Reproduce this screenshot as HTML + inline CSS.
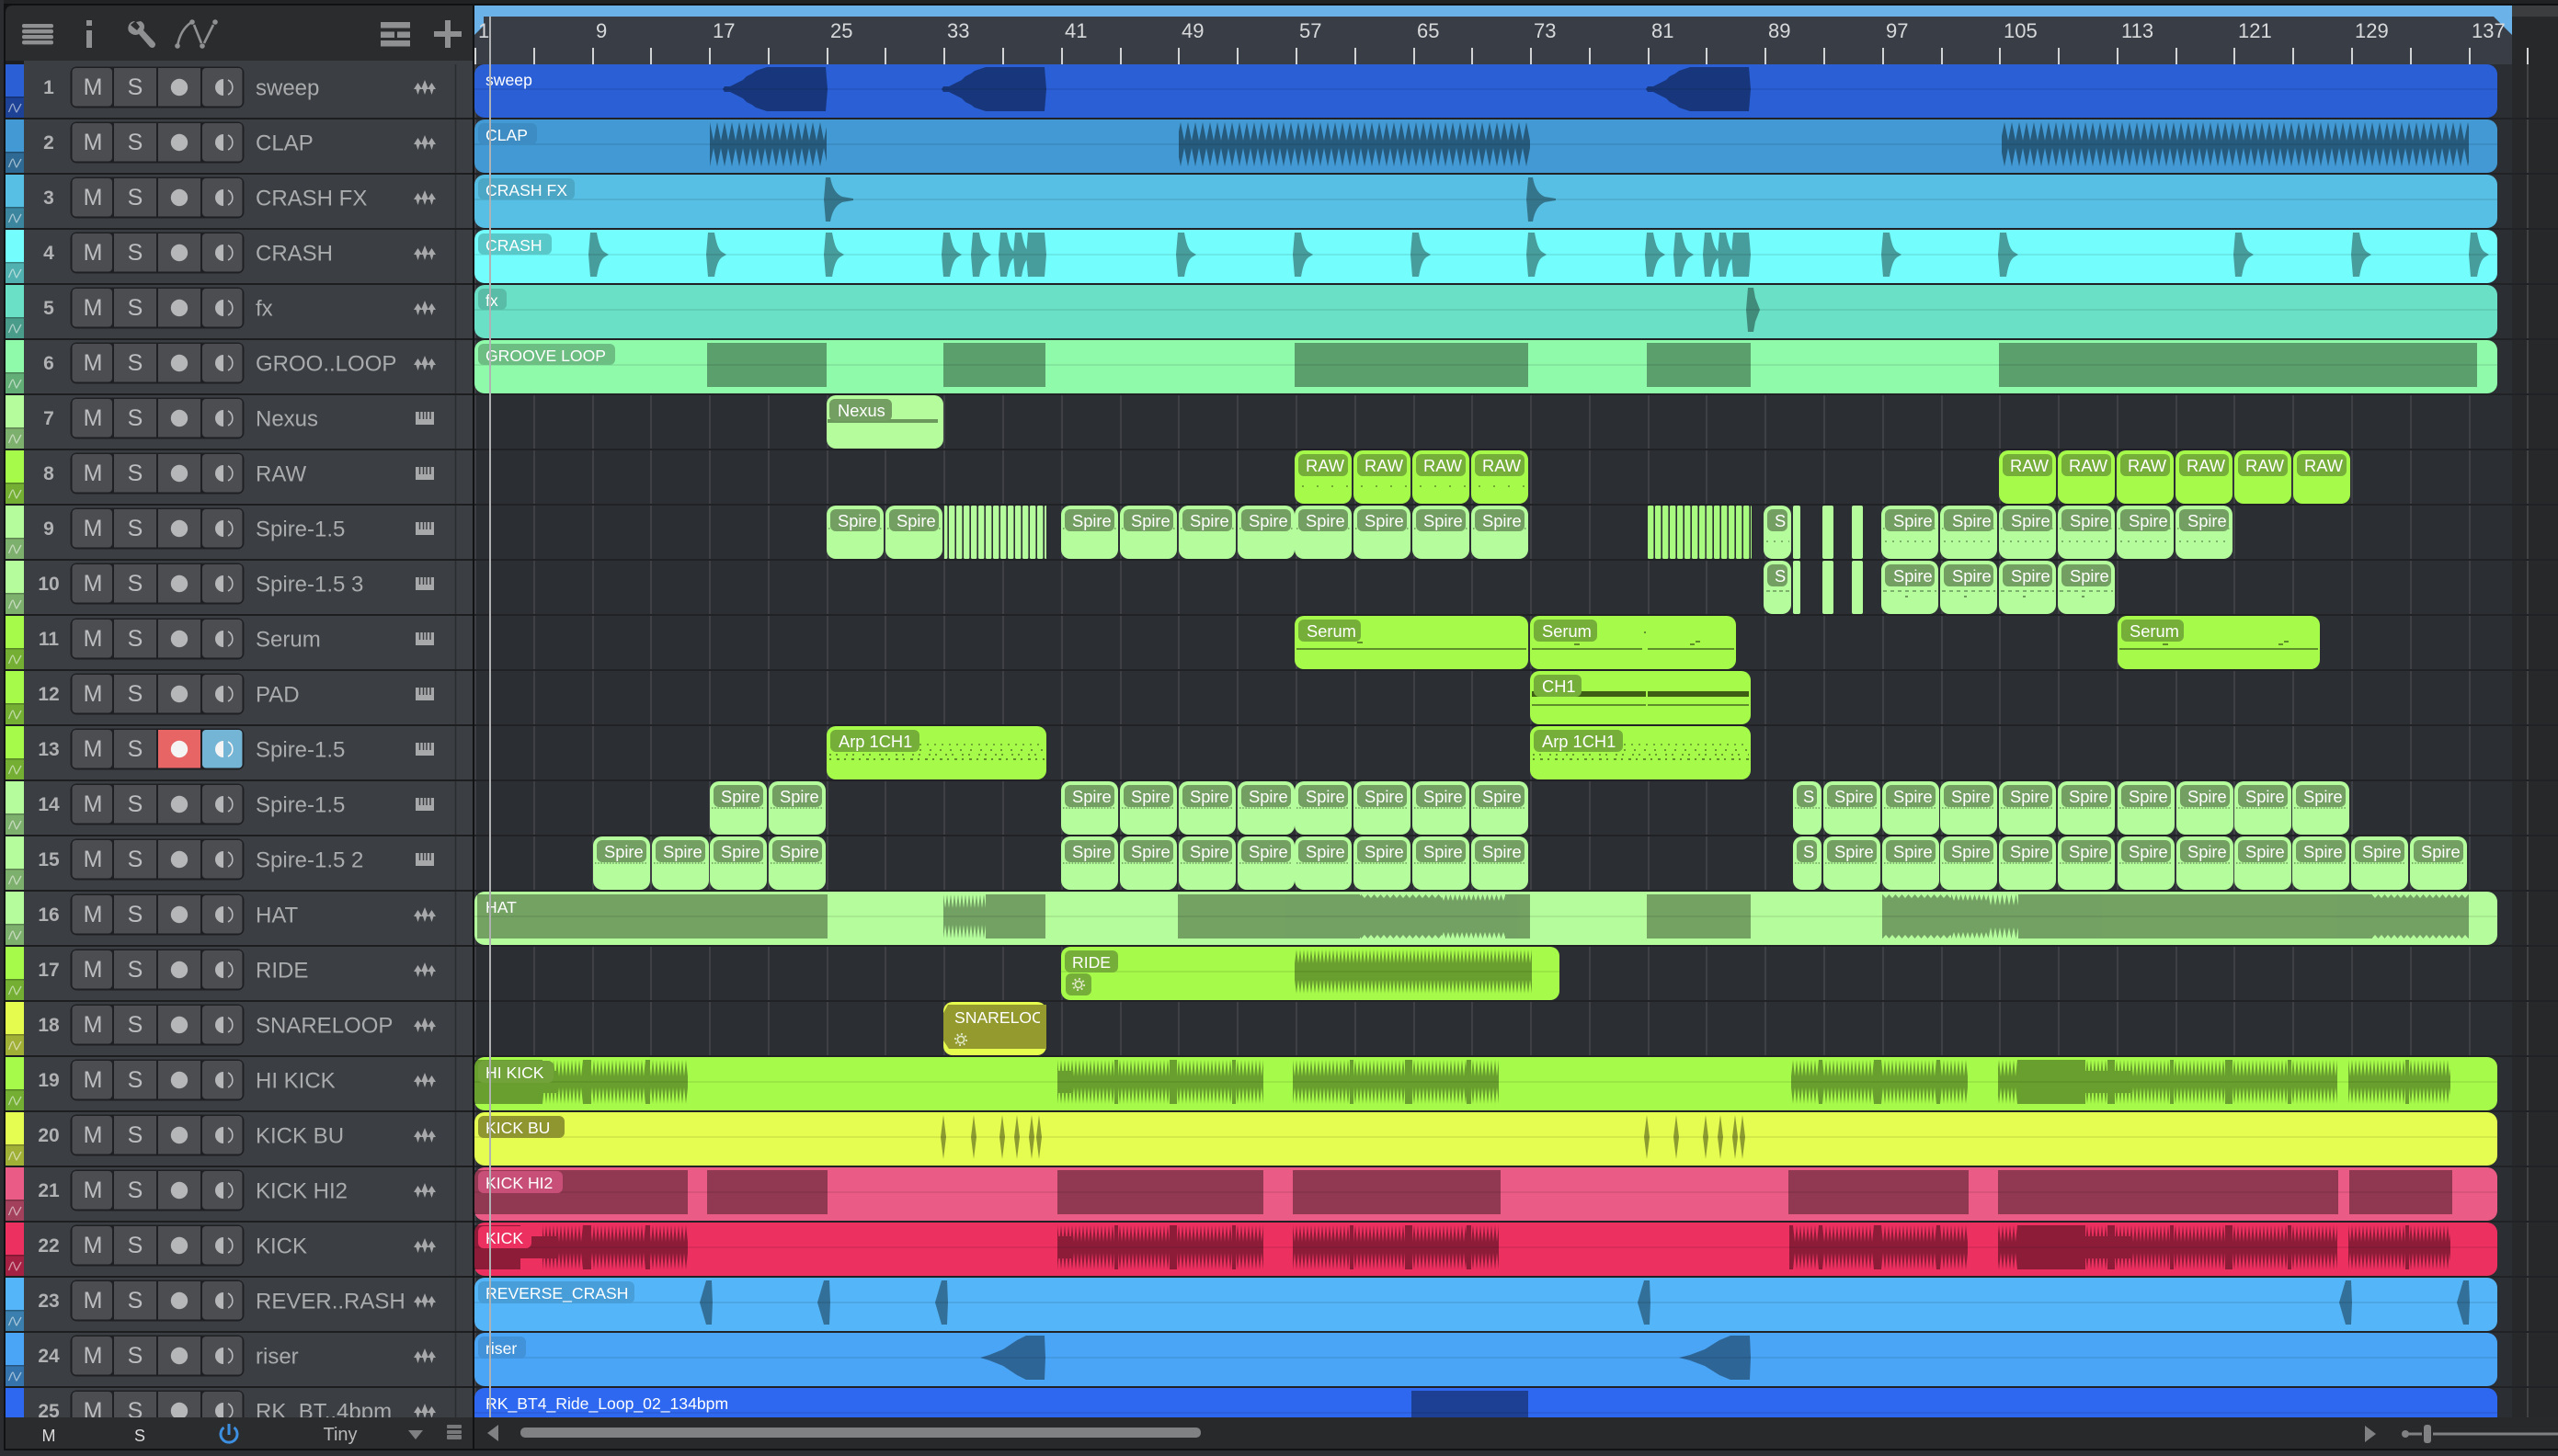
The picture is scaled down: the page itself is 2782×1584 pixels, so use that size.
<!DOCTYPE html>
<html><head><meta charset="utf-8"><title>Arrangement</title>
<style>
html,body{margin:0;padding:0;background:#2b2d30;width:2782px;height:1584px;overflow:hidden}
svg{display:block;font-family:"Liberation Sans",sans-serif}
.n{font-size:21px;font-weight:700;fill:#b0b1b3;text-anchor:middle}
.b{font-size:25px;fill:#bcbdbf;text-anchor:middle}
.k{font-size:24px;fill:#a9abad}
.l{font-size:17.6px;fill:#fff}
.m{font-size:18.3px;fill:#fff;transform:translateX(1px)}
.h{font-size:22px;fill:#d8d9da}
</style></head><body>
<svg width="2782" height="1584" viewBox="0 0 2782 1584" xmlns="http://www.w3.org/2000/svg">
<defs>
<pattern id="d8" patternUnits="userSpaceOnUse" width="8" height="48" y="3"><polygon points="0,20 4,0 8,20 8,28 4,48 0,28"/></pattern>
<pattern id="k4" patternUnits="userSpaceOnUse" width="4" height="48" y="3"><polygon points="0,18 2,0 4,18 4,30 2,48 0,30"/></pattern>
<pattern id="h4" patternUnits="userSpaceOnUse" width="4" height="48" y="3"><polygon points="0,15 2,0 4,15 4,33 2,48 0,33"/></pattern>
<pattern id="t3" patternUnits="userSpaceOnUse" width="7" height="48" y="3"><polygon points="0,4 3.5,0 7,4 7,44 3.5,48 0,44"/></pattern>
<pattern id="t6" patternUnits="userSpaceOnUse" width="5" height="48" y="3"><polygon points="0,7 2.5,0 5,7 5,41 2.5,48 0,41"/></pattern>
<pattern id="t9" patternUnits="userSpaceOnUse" width="5" height="48" y="3"><polygon points="0,12 2.5,0 5,12 5,36 2.5,48 0,36"/></pattern>
<pattern id="st" patternUnits="userSpaceOnUse" width="8" height="58"><rect x="0" width="6.4" height="58" rx="1.5" fill="#b5fd9c"/></pattern>
<pattern id="st2" patternUnits="userSpaceOnUse" width="8" height="58"><rect x="0" width="6.4" height="58" rx="1.5" fill="#a8fb80"/></pattern>
<clipPath id="cs"><rect x="1031" y="0" width="100" height="58"/></clipPath>

<g id="full"><rect x="516" width="2200" height="58" rx="11"/><rect x="516" y="26" width="2200" height="2" fill="#000" opacity=".08"/></g>
<path id="c" d="M0,27 L2,3 H9 C11,14 13,21 17,24 L22,27 L17,30 C13,33 11,40 9,51 H2Z"/>
<path id="c3" d="M0,27 L2,3 H7 C9,14 13,21 20,24 L32,26 V28 L20,30 C13,33 9,40 7,51 H2Z"/>
<path id="sw" d="M0,27 L2,24 H8 L12,22 L16,20 L22,17 L26,13 L32,10 L36,7 L42,5 L48,3 H112 L114,27 L112,51 H48 L42,49 L36,47 L32,44 L26,41 L22,37 L16,34 L12,32 L8,30 H2Z"/>
<path id="ri" d="M0,27 L10,24 L25,18 L40,8 L50,3 H70 L71,27 L70,51 H50 L40,46 L25,36 L10,30Z"/>
<path id="ri2" d="M0,27 L12,24 L28,18 L44,8 L56,3 H77 L78,27 L77,51 H56 L44,46 L28,36 L12,30Z"/>
<path id="dm" d="M0,27 L3,3 L6,27 L3,51Z"/>
<path id="rc" d="M0,27 L7,3 H13 L14,27 L13,51 H7Z"/>

<g id="kw">
<rect x="590" y="3" width="158" height="48" fill="url(#k4)"/><rect x="590" y="23" width="158" height="8"/><rect x="590" y="15" width="15" height="24"/><rect x="634" y="3" width="9" height="48"/><rect x="702" y="3" width="5" height="48"/>
<rect x="1150" y="3" width="224" height="48" fill="url(#k4)"/><rect x="1150" y="23" width="224" height="8"/><rect x="1150" y="15" width="15" height="24"/><rect x="1212" y="3" width="4" height="48"/><rect x="1272" y="3" width="8" height="48"/><rect x="1340" y="3" width="4" height="48"/>
<rect x="1406" y="3" width="224" height="48" fill="url(#k4)"/><rect x="1406" y="23" width="224" height="8"/><rect x="1468" y="3" width="4" height="48"/><rect x="1528" y="3" width="8" height="48"/><rect x="1595" y="3" width="5" height="48"/>
<rect x="1948" y="3" width="192" height="48" fill="url(#k4)"/><rect x="1948" y="23" width="192" height="8"/><rect x="1978" y="3" width="4" height="48"/><rect x="2038" y="3" width="8" height="48"/><rect x="2106" y="3" width="4" height="48"/>
<rect x="2173" y="3" width="369" height="48" fill="url(#k4)"/><rect x="2173" y="23" width="369" height="8"/><rect x="2194" y="3" width="74" height="48"/><rect x="2268" y="15" width="50" height="24"/><rect x="2292" y="3" width="8" height="48"/><rect x="2360" y="3" width="4" height="48"/><rect x="2420" y="3" width="8" height="48"/><rect x="2488" y="3" width="4" height="48"/>
<rect x="2554" y="3" width="111" height="48" fill="url(#k4)"/><rect x="2554" y="23" width="111" height="8"/><rect x="2616" y="3" width="4" height="48"/>
</g>

<g id="sp"><rect width="62" height="58" rx="10" fill="#b5fd9c"/><path d="M2,25H60" stroke="#6c9a5c" stroke-width="1.5" stroke-dasharray="1.5 2" fill="none"/><rect x="4" y="4" width="54" height="24" rx="6" fill="#749f62"/></g>
<g id="sp9"><rect width="62" height="58" rx="10" fill="#b5fd9c"/><path d="M4,39H60" stroke="#6c9a5c" stroke-width="1.6" stroke-dasharray="2 6" fill="none"/><path d="M2,25H60" stroke="#6c9a5c" stroke-width="1.5" stroke-dasharray="1.5 4" fill="none"/><rect x="4" y="4" width="54" height="24" rx="6" fill="#749f62"/></g>
<g id="sp10"><rect width="62" height="58" rx="10" fill="#b5fd9c"/><path d="M2,33H60" stroke="#6c9a5c" stroke-width="1.6" stroke-dasharray="4 4" fill="none"/><path d="M26,39h3" stroke="#6c9a5c" stroke-width="2" fill="none"/><rect x="4" y="4" width="54" height="24" rx="6" fill="#749f62"/></g>
<g id="sp14"><rect width="62" height="58" rx="10" fill="#b5fd9c"/><path d="M2,29H58" stroke="#6c9a5c" stroke-width="1.6" stroke-dasharray="1.5 1.7" fill="none"/><rect x="4" y="4" width="54" height="24" rx="6" fill="#749f62"/></g>
<g id="ss"><rect width="31" height="58" rx="10" fill="#b5fd9c"/><path d="M2,29H29" stroke="#6c9a5c" stroke-width="1.6" stroke-dasharray="1.5 1.7" fill="none"/><rect x="4" y="4" width="22" height="24" rx="6" fill="#749f62"/></g>
<g id="raw"><rect width="62" height="58" rx="10" fill="#a6fb4a"/><path d="M8,39H60" stroke="#5f8f2a" stroke-width="1.6" stroke-dasharray="2 14" fill="none"/><rect x="4" y="4" width="54" height="24" rx="6" fill="#76ae3a"/></g>
<g id="raw2"><rect width="62" height="58" rx="10" fill="#a6fb4a"/><rect x="4" y="4" width="54" height="24" rx="6" fill="#76ae3a"/></g>

<g id="t">
<rect x="6" width="20" height="58"/><rect x="6" y="35" width="20" height="23" fill="#000" opacity=".3"/><rect x="6" y="35" width="20" height="1.5" fill="#000" opacity=".25"/>
<path d="M9.5,52 C12,46 13,43 14,43 C15,43 17,52 18,52 L23,43" fill="none" stroke="#fff" stroke-opacity=".55" stroke-width="1.3"/>
<rect x="76.5" y="2.5" width="189" height="45" rx="7" fill="#1f2023"/>
<rect x="78.5" y="4" width="43.5" height="41.5" rx="4" fill="#4b4d51"/><rect x="124" y="4" width="46" height="41.5" fill="#4b4d51"/><rect x="172" y="4" width="46" height="41.5" fill="#4b4d51"/><rect x="220" y="4" width="43.5" height="41.5" rx="4" fill="#4b4d51"/>
<circle cx="195" cy="25" r="9.2" fill="#b6b7b9"/>
<path d="M243,16 A9,9 0 0 0 243,34 Z" fill="#b6b7b9"/><path d="M248,17 A9,9 0 0 1 248,33" fill="none" stroke="#b6b7b9" stroke-width="1.6"/>
</g>
<g id="a" fill="#a7a8aa"><path d="M450,27 L454.5,20 L459,27Z M452.5,27 L454.5,33 L456.5,27Z M458,27 L462,17 L466,27Z M460,27 L462,33 L464,27Z M465,27 L469.5,20 L474,27Z M467.5,27 L469.5,33 L471.5,27Z"/></g>
<g id="p"><rect x="452" y="18" width="20" height="14" fill="#a7a8aa"/><path d="M456.5,18V26M460.5,18V26M464,18V26M468,18V26" stroke="#3b3e42" stroke-width="1.5"/></g>
<g id="gear" fill="none" stroke="#dfe8c8"><circle r="3.6" stroke-width="1.6"/><circle r="6" stroke-width="2.2" stroke-dasharray="1.8 2.9"/></g>
</defs>

<!-- backdrop -->
<rect width="2782" height="1584" fill="#2b2d30"/>
<rect width="2782" height="4" fill="#202224"/>
<rect y="4" width="2782" height="2" fill="#0f1011"/>
<rect x="4" y="5" width="2778" height="1572" fill="#111214"/>

<!-- arrangement bg -->
<rect x="516" y="66" width="2216" height="1476" fill="#2b2e32"/>
<rect x="2732" y="6" width="50" height="1536" fill="#27282a"/>
<path d="M2749 70V1542" stroke="#4a4b4d" stroke-width="1.5"/>
<path d="M517 70V1542M581 70V1542M645 70V1542M708 70V1542M772 70V1542M836 70V1542M900 70V1542M963 70V1542M1027 70V1542M1091 70V1542M1155 70V1542M1219 70V1542M1282 70V1542M1346 70V1542M1410 70V1542M1474 70V1542M1538 70V1542M1601 70V1542M1665 70V1542M1729 70V1542M1793 70V1542M1856 70V1542M1920 70V1542M1984 70V1542M2048 70V1542M2112 70V1542M2175 70V1542M2239 70V1542M2303 70V1542M2367 70V1542M2430 70V1542M2494 70V1542M2558 70V1542M2622 70V1542M2686 70V1542" stroke="#44474c" stroke-width="1.5"/>
<path d="M516 129H2782M516 189H2782M516 249H2782M516 309H2782M516 369H2782M516 429H2782M516 489H2782M516 549H2782M516 609H2782M516 669H2782M516 729H2782M516 789H2782M516 849H2782M516 909H2782M516 969H2782M516 1029H2782M516 1089H2782M516 1149H2782M516 1209H2782M516 1269H2782M516 1329H2782M516 1389H2782M516 1449H2782M516 1509H2782" stroke="#202225" stroke-width="2"/>

<!-- row 1 -->
<g transform="translate(0,70)"><use href="#full" fill="#2a5fd6"/><g opacity=".42"><use href="#sw" x="786"/><use href="#sw" x="1024"/><use href="#sw" x="1790"/></g><text class="l" x="528" y="23">sweep</text></g>
<!-- row 2 -->
<g transform="translate(0,130)"><use href="#full" fill="#4299d4"/><g opacity=".4"><g fill="url(#d8)"><rect x="772" y="3" width="127" height="48"/><rect x="1282" y="3" width="382" height="48"/><rect x="2177" y="3" width="508" height="48"/></g><rect x="772" y="23" width="127" height="8"/><rect x="1282" y="23" width="382" height="8"/><rect x="2177" y="23" width="508" height="8"/></g><rect x="520" y="4" width="64" height="23" rx="6" fill="#3d8cc3"/><text class="l" x="528" y="23">CLAP</text></g>
<!-- row 3 -->
<g transform="translate(0,190)"><use href="#full" fill="#57bfe3"/><g opacity=".38"><use href="#c3" x="896"/><use href="#c3" x="1660"/></g><rect x="520" y="4" width="105" height="23" rx="6" fill="#4ca6c6"/><text class="l" x="528" y="23">CRASH FX</text></g>
<!-- row 4 -->
<g transform="translate(0,250)"><use href="#full" fill="#74fdfd"/><g opacity=".38"><use href="#c" x="640"/><use href="#c" x="768"/><use href="#c" x="896"/><use href="#c" x="1024"/><use href="#c" x="1056"/><use href="#c" x="1086"/><use href="#c" x="1102"/><path d="M1116,27 L1118,3 H1136 L1138,27 L1136,51 H1118Z"/><use href="#c" x="1279"/><use href="#c" x="1406"/><use href="#c" x="1534"/><use href="#c" x="1660"/><use href="#c" x="1789"/><use href="#c" x="1820"/><use href="#c" x="1852"/><use href="#c" x="1868"/><path d="M1883,27 L1885,3 H1902 L1904,27 L1902,51 H1885Z"/><use href="#c" x="2046"/><use href="#c" x="2173"/><use href="#c" x="2429"/><use href="#c" x="2557"/><use href="#c" x="2685"/></g><rect x="520" y="4" width="80" height="23" rx="6" fill="#58c8c8"/><text class="l" x="528" y="23">CRASH</text></g>
<!-- row 5 -->
<g transform="translate(0,310)"><use href="#full" fill="#6ae0c6"/><path opacity=".38" transform="translate(1899,0)" d="M0,27 L2,3 H8 L10,14 L15,27 L10,40 L8,51 H2Z"/><rect x="520" y="4" width="31" height="23" rx="6" fill="#58bca6"/><text class="l" x="528" y="23">fx</text></g>
<!-- row 6 -->
<g transform="translate(0,370)"><use href="#full" fill="#8ffaaa"/><g opacity=".36"><rect x="769" y="3" width="130" height="48"/><rect x="1026" y="3" width="111" height="48"/><rect x="1408" y="3" width="254" height="48"/><rect x="1791" y="3" width="113" height="48"/><rect x="2174" y="3" width="520" height="48"/></g><rect x="520" y="4" width="149" height="23" rx="6" fill="#6cbe82"/><text class="l" x="528" y="23">GROOVE LOOP</text></g>
<!-- row 7 -->
<g transform="translate(0,430)"><rect x="899" width="127" height="58" rx="10" fill="#b5fd9c"/><rect x="900" y="26" width="120" height="4" fill="#6c9a5c"/><rect x="902" y="4" width="68" height="24" rx="6" fill="#749f62"/><text class="m" x="910" y="23">Nexus</text></g>
<!-- row 8 -->
<g transform="translate(0,490)">
<use href="#raw" x="1408"/><text class="m" x="1419" y="23">RAW</text>
<use href="#raw" x="1472"/><text class="m" x="1483" y="23">RAW</text>
<use href="#raw" x="1536"/><text class="m" x="1547" y="23">RAW</text>
<use href="#raw" x="1600"/><text class="m" x="1611" y="23">RAW</text>
<use href="#raw2" x="2174"/><text class="m" x="2185" y="23">RAW</text>
<use href="#raw2" x="2238"/><text class="m" x="2249" y="23">RAW</text>
<use href="#raw2" x="2302"/><text class="m" x="2313" y="23">RAW</text>
<use href="#raw2" x="2366"/><text class="m" x="2377" y="23">RAW</text>
<use href="#raw2" x="2430"/><text class="m" x="2441" y="23">RAW</text>
<use href="#raw2" x="2494"/><text class="m" x="2505" y="23">RAW</text>
</g>
<!-- row 9 -->
<g transform="translate(0,550)">
<use href="#sp" x="899"/><text class="m" x="910" y="23">Spire</text>
<use href="#sp" x="963"/><text class="m" x="974" y="23">Spire</text>
<rect x="1027" width="111" height="58" fill="url(#st)"/>
<use href="#sp" x="1154"/><text class="m" x="1165" y="23">Spire</text>
<use href="#sp" x="1218"/><text class="m" x="1229" y="23">Spire</text>
<use href="#sp" x="1282"/><text class="m" x="1293" y="23">Spire</text>
<use href="#sp" x="1346"/><text class="m" x="1357" y="23">Spire</text>
<use href="#sp" x="1408"/><text class="m" x="1419" y="23">Spire</text>
<use href="#sp" x="1472"/><text class="m" x="1483" y="23">Spire</text>
<use href="#sp" x="1536"/><text class="m" x="1547" y="23">Spire</text>
<use href="#sp" x="1600"/><text class="m" x="1611" y="23">Spire</text>
<rect x="1792" width="113" height="58" fill="url(#st2)"/>
<rect x="1918" width="30" height="58" rx="10" fill="#b5fd9c"/><path d="M1921,39H1946" stroke="#6c9a5c" stroke-width="1.6" stroke-dasharray="2 6"/><rect x="1922" y="4" width="22" height="24" rx="6" fill="#749f62"/><text class="m" x="1929" y="23">S</text>
<rect x="1950" width="8" height="58" rx="2" fill="#b5fd9c"/><rect x="1982" width="12" height="58" rx="2" fill="#b5fd9c"/><rect x="2014" width="12" height="58" rx="2" fill="#b5fd9c"/>
<use href="#sp9" x="2046"/><text class="m" x="2058" y="23">Spire</text>
<use href="#sp9" x="2110"/><text class="m" x="2122" y="23">Spire</text>
<use href="#sp9" x="2174"/><text class="m" x="2186" y="23">Spire</text>
<use href="#sp9" x="2238"/><text class="m" x="2250" y="23">Spire</text>
<use href="#sp9" x="2302"/><text class="m" x="2314" y="23">Spire</text>
<use href="#sp9" x="2366"/><text class="m" x="2378" y="23">Spire</text>
</g>
<!-- row 10 -->
<g transform="translate(0,610)">
<rect x="1918" width="30" height="58" rx="10" fill="#b5fd9c"/><path d="M1921,33H1946" stroke="#6c9a5c" stroke-width="1.6" stroke-dasharray="4 3"/><rect x="1922" y="4" width="22" height="24" rx="6" fill="#749f62"/><text class="m" x="1929" y="23">S</text>
<rect x="1950" width="8" height="58" rx="2" fill="#b5fd9c"/><rect x="1982" width="12" height="58" rx="2" fill="#b5fd9c"/><rect x="2014" width="12" height="58" rx="2" fill="#b5fd9c"/>
<use href="#sp10" x="2046"/><text class="m" x="2058" y="23">Spire</text>
<use href="#sp10" x="2110"/><text class="m" x="2122" y="23">Spire</text>
<use href="#sp10" x="2174"/><text class="m" x="2186" y="23">Spire</text>
<use href="#sp10" x="2238"/><text class="m" x="2250" y="23">Spire</text>
</g>
<!-- row 11 -->
<g transform="translate(0,670)">
<rect x="1408" width="254" height="58" rx="10" fill="#a6fb4a"/><path d="M1410,36H1660" stroke="#5f8f2a" stroke-width="2"/><path d="M1476,29h6" stroke="#5f8f2a" stroke-width="2"/><rect x="1412" y="4" width="68" height="24" rx="6" fill="#76ae3a"/><text class="m" x="1420" y="23">Serum</text>
<rect x="1664" width="224" height="58" rx="10" fill="#a6fb4a"/><path d="M1666,36H1786M1792,36H1886" stroke="#5f8f2a" stroke-width="2"/><path d="M1712,31h6M1788,18h2M1838,31h5M1844,28h5" stroke="#5f8f2a" stroke-width="2"/><rect x="1668" y="4" width="69" height="24" rx="6" fill="#76ae3a"/><text class="m" x="1676" y="23">Serum</text>
<rect x="2303" width="220" height="58" rx="10" fill="#a6fb4a"/><path d="M2305,36H2521" stroke="#5f8f2a" stroke-width="2"/><path d="M2352,31h6M2478,31h5M2484,28h5" stroke="#5f8f2a" stroke-width="2"/><rect x="2307" y="4" width="68" height="24" rx="6" fill="#76ae3a"/><text class="m" x="2315" y="23">Serum</text>
</g>
<!-- row 12 -->
<g transform="translate(0,730)">
<rect x="1664" width="240" height="58" rx="10" fill="#a6fb4a"/><path d="M1666,25H1790M1792,25H1902" stroke="#3e5e14" stroke-width="6"/><path d="M1666,37H1790M1792,37H1902" stroke="#5f8f2a" stroke-width="2"/><rect x="1668" y="4" width="52" height="24" rx="6" fill="#76ae3a"/><text class="m" x="1676" y="23">CH1</text>
</g>
<!-- row 13 -->
<g transform="translate(0,790)" fill="none" stroke="#5f8f2a">
<rect x="899" width="239" height="58" rx="10" fill="#a6fb4a" stroke="none"/><path d="M1000,20H1136" stroke-width="1.6" stroke-dasharray="2 6"/><path d="M1000,26H1136" stroke-width="1.8" stroke-dasharray="2 9"/><path d="M902,31H1136" stroke-width="1.8" stroke-dasharray="2 5 2 9"/><path d="M902,36H1136" stroke-width="2" stroke-dasharray="2 6 3 5"/><rect x="903" y="4" width="97" height="24" rx="6" fill="#76ae3a" stroke="none"/><text class="m" x="911" y="23" stroke="none">Arp 1CH1</text>
<rect x="1664" width="240" height="58" rx="10" fill="#a6fb4a" stroke="none"/><path d="M1766,20H1902" stroke-width="1.6" stroke-dasharray="2 6"/><path d="M1766,26H1902" stroke-width="1.8" stroke-dasharray="2 9"/><path d="M1667,31H1902" stroke-width="1.8" stroke-dasharray="2 5 2 9"/><path d="M1667,36H1902" stroke-width="2" stroke-dasharray="2 6 3 5"/><rect x="1668" y="4" width="97" height="24" rx="6" fill="#76ae3a" stroke="none"/><text class="m" x="1676" y="23" stroke="none">Arp 1CH1</text>
</g>
<!-- row 14 -->
<g transform="translate(0,850)">
<use href="#sp14" x="772"/><text class="m" x="783" y="23">Spire</text>
<use href="#sp14" x="836"/><text class="m" x="847" y="23">Spire</text>
<use href="#sp14" x="1154"/><text class="m" x="1165" y="23">Spire</text>
<use href="#sp14" x="1218"/><text class="m" x="1229" y="23">Spire</text>
<use href="#sp14" x="1282"/><text class="m" x="1293" y="23">Spire</text>
<use href="#sp14" x="1346"/><text class="m" x="1357" y="23">Spire</text>
<use href="#sp14" x="1408"/><text class="m" x="1419" y="23">Spire</text>
<use href="#sp14" x="1472"/><text class="m" x="1483" y="23">Spire</text>
<use href="#sp14" x="1536"/><text class="m" x="1547" y="23">Spire</text>
<use href="#sp14" x="1600"/><text class="m" x="1611" y="23">Spire</text>
<use href="#ss" x="1950"/><text class="m" x="1960" y="23">S</text>
<use href="#sp14" x="1983"/><text class="m" x="1994" y="23">Spire</text>
<use href="#sp14" x="2047"/><text class="m" x="2058" y="23">Spire</text>
<use href="#sp14" x="2110"/><text class="m" x="2121" y="23">Spire</text>
<use href="#sp14" x="2174"/><text class="m" x="2185" y="23">Spire</text>
<use href="#sp14" x="2238"/><text class="m" x="2249" y="23">Spire</text>
<use href="#sp14" x="2303"/><text class="m" x="2314" y="23">Spire</text>
<use href="#sp14" x="2367"/><text class="m" x="2378" y="23">Spire</text>
<use href="#sp14" x="2430"/><text class="m" x="2441" y="23">Spire</text>
<use href="#sp14" x="2493"/><text class="m" x="2504" y="23">Spire</text>
</g>
<!-- row 15 -->
<g transform="translate(0,910)">
<use href="#sp14" x="645"/><text class="m" x="656" y="23">Spire</text>
<use href="#sp14" x="709"/><text class="m" x="720" y="23">Spire</text>
<use href="#sp14" x="772"/><text class="m" x="783" y="23">Spire</text>
<use href="#sp14" x="836"/><text class="m" x="847" y="23">Spire</text>
<use href="#sp14" x="1154"/><text class="m" x="1165" y="23">Spire</text>
<use href="#sp14" x="1218"/><text class="m" x="1229" y="23">Spire</text>
<use href="#sp14" x="1282"/><text class="m" x="1293" y="23">Spire</text>
<use href="#sp14" x="1346"/><text class="m" x="1357" y="23">Spire</text>
<use href="#sp14" x="1408"/><text class="m" x="1419" y="23">Spire</text>
<use href="#sp14" x="1472"/><text class="m" x="1483" y="23">Spire</text>
<use href="#sp14" x="1536"/><text class="m" x="1547" y="23">Spire</text>
<use href="#sp14" x="1600"/><text class="m" x="1611" y="23">Spire</text>
<use href="#ss" x="1950"/><text class="m" x="1960" y="23">S</text>
<use href="#sp14" x="1983"/><text class="m" x="1994" y="23">Spire</text>
<use href="#sp14" x="2047"/><text class="m" x="2058" y="23">Spire</text>
<use href="#sp14" x="2110"/><text class="m" x="2121" y="23">Spire</text>
<use href="#sp14" x="2174"/><text class="m" x="2185" y="23">Spire</text>
<use href="#sp14" x="2238"/><text class="m" x="2249" y="23">Spire</text>
<use href="#sp14" x="2303"/><text class="m" x="2314" y="23">Spire</text>
<use href="#sp14" x="2367"/><text class="m" x="2378" y="23">Spire</text>
<use href="#sp14" x="2430"/><text class="m" x="2441" y="23">Spire</text>
<use href="#sp14" x="2493"/><text class="m" x="2504" y="23">Spire</text>
<use href="#sp14" x="2557"/><text class="m" x="2568" y="23">Spire</text>
<use href="#sp14" x="2621"/><text class="m" x="2632" y="23">Spire</text>
</g>
<!-- row 16 -->
<g transform="translate(0,970)"><use href="#full" fill="#b5fd9c"/><g opacity=".36">
<rect x="519" y="3" width="381" height="48"/>
<rect x="1026" y="3" width="46" height="48" fill="url(#h4)"/><rect x="1026" y="19" width="46" height="16"/><rect x="1072" y="3" width="65" height="48"/>
<rect x="1281" y="3" width="198" height="48"/>
<rect x="1479" y="3" width="90" height="48" fill="url(#t3)"/><rect x="1569" y="3" width="68" height="48" fill="url(#t6)"/><rect x="1479" y="11" width="158" height="32"/><rect x="1637" y="3" width="27" height="48"/>
<rect x="1791" y="3" width="113" height="48"/>
<rect x="2047" y="3" width="75" height="48" fill="url(#t3)"/><rect x="2122" y="3" width="40" height="48" fill="url(#t6)"/><rect x="2162" y="3" width="33" height="48" fill="url(#t9)"/><rect x="2047" y="16" width="148" height="22"/>
<rect x="2195" y="3" width="385" height="48"/>
<rect x="2580" y="3" width="105" height="48" fill="url(#t3)"/><rect x="2580" y="8" width="105" height="38"/>
</g><text class="l" x="528" y="23">HAT</text></g>
<!-- row 17 -->
<g transform="translate(0,1030)"><rect x="1154" width="542" height="58" rx="10" fill="#a6fb4a"/><rect x="1154" y="26" width="542" height="2" fill="#000" opacity=".08"/><g opacity=".36"><rect x="1408" y="3" width="258" height="48" fill="url(#h4)"/><rect x="1408" y="19" width="258" height="16"/></g><rect x="1158" y="4" width="58" height="24" rx="6" fill="#76ae3a"/><text class="l" x="1166" y="23">RIDE</text><rect x="1159" y="29" width="28" height="24" rx="6" fill="#76ae3a"/><use href="#gear" x="1173" y="41"/></g>
<!-- row 18 -->
<g transform="translate(0,1090)"><rect x="1026" width="112" height="58" rx="10" fill="#e5fb4e"/><path d="M1026,12 L1031,3 H1138 V51 H1032 L1026,42Z" fill="#949a2d"/><text class="l" x="1038" y="23" clip-path="url(#cs)">SNARELOOP</text><use href="#gear" x="1045" y="41"/></g>
<!-- row 19 -->
<g transform="translate(0,1150)"><use href="#full" fill="#a6fb4a"/><g opacity=".36"><rect x="516" y="3" width="74" height="48"/><use href="#kw"/></g><rect x="520" y="4" width="82" height="24" rx="6" fill="#72a23a"/><text class="l" x="528" y="23">HI KICK</text></g>
<!-- row 20 -->
<g transform="translate(0,1210)"><use href="#full" fill="#e5fd50"/><g opacity=".38"><use href="#dm" x="1023"/><use href="#dm" x="1056"/><use href="#dm" x="1087"/><use href="#dm" x="1103"/><use href="#dm" x="1119"/><use href="#dm" x="1127"/><use href="#dm" x="1788"/><use href="#dm" x="1820"/><use href="#dm" x="1852"/><use href="#dm" x="1868"/><use href="#dm" x="1884"/><use href="#dm" x="1892"/></g><rect x="520" y="4" width="94" height="24" rx="6" fill="#8f962f"/><text class="l" x="528" y="23">KICK BU</text></g>
<!-- row 21 -->
<g transform="translate(0,1270)"><use href="#full" fill="#ea5c85"/><g opacity=".38"><rect x="516" y="3" width="232" height="48"/><rect x="769" y="3" width="131" height="48"/><rect x="1150" y="3" width="224" height="48"/><rect x="1406" y="3" width="226" height="48"/><rect x="1945" y="3" width="196" height="48"/><rect x="2173" y="3" width="370" height="48"/><rect x="2555" y="3" width="112" height="48"/></g><rect x="520" y="4" width="92" height="24" rx="6" fill="#c85078"/><text class="l" x="528" y="23">KICK HI2</text></g>
<!-- row 22 -->
<g transform="translate(0,1330)"><use href="#full" fill="#ec3060"/><g opacity=".4"><rect x="516" y="3" width="50" height="48"/><rect x="566" y="15" width="24" height="24"/><use href="#kw"/><rect x="1946" y="3" width="4" height="48"/></g><rect x="520" y="4" width="58" height="24" rx="6" fill="#ec3060"/><text class="l" x="528" y="23">KICK</text></g>
<!-- row 23 -->
<g transform="translate(0,1390)"><use href="#full" fill="#54b6f8"/><g opacity=".38"><use href="#rc" x="761"/><use href="#rc" x="889"/><use href="#rc" x="1017"/><use href="#rc" x="1781"/><use href="#rc" x="2544"/><use href="#rc" x="2672"/></g><rect x="520" y="4" width="170" height="24" rx="6" fill="#479ed8"/><text class="l" x="528" y="23">REVERSE_CRASH</text></g>
<!-- row 24 -->
<g transform="translate(0,1450)"><use href="#full" fill="#4ba5f6"/><g opacity=".38"><use href="#ri" x="1066"/><use href="#ri2" x="1826"/></g><rect x="520" y="4" width="52" height="24" rx="6" fill="#4192d8"/><text class="l" x="528" y="23">riser</text></g>
<!-- row 25 -->
<g transform="translate(0,1510)"><use href="#full" fill="#2f68f0"/><rect x="1535" y="3" width="127" height="48" opacity=".38"/><text class="l" x="528" y="23">RK_BT4_Ride_Loop_02_134bpm</text></g>

<!-- left panel -->
<rect x="26" y="66" width="488" height="1476" fill="#3b3e42"/>
<rect x="6" y="66" width="20" height="4" fill="#1d1e20"/>
<path d="M495.5 70V1542" stroke="#2a2c2f" stroke-width="1.5"/>
<path d="M6 129H514M6 189H514M6 249H514M6 309H514M6 369H514M6 429H514M6 489H514M6 549H514M6 609H514M6 669H514M6 729H514M6 789H514M6 849H514M6 909H514M6 969H514M6 1029H514M6 1089H514M6 1149H514M6 1209H514M6 1269H514M6 1329H514M6 1389H514M6 1449H514M6 1509H514" stroke="#1d1e20" stroke-width="2"/>

<g transform="translate(0,70)"><use href="#t" fill="#2a5fd6"/><use href="#a"/><text class="n" x="53" y="32">1</text><text class="b" x="101" y="33">M</text><text class="b" x="147" y="33">S</text><text class="k" x="278" y="33.5">sweep</text></g>
<g transform="translate(0,130)"><use href="#t" fill="#4299d4"/><use href="#a"/><text class="n" x="53" y="32">2</text><text class="b" x="101" y="33">M</text><text class="b" x="147" y="33">S</text><text class="k" x="278" y="33.5">CLAP</text></g>
<g transform="translate(0,190)"><use href="#t" fill="#57bfe3"/><use href="#a"/><text class="n" x="53" y="32">3</text><text class="b" x="101" y="33">M</text><text class="b" x="147" y="33">S</text><text class="k" x="278" y="33.5">CRASH FX</text></g>
<g transform="translate(0,250)"><use href="#t" fill="#74fdfd"/><use href="#a"/><text class="n" x="53" y="32">4</text><text class="b" x="101" y="33">M</text><text class="b" x="147" y="33">S</text><text class="k" x="278" y="33.5">CRASH</text></g>
<g transform="translate(0,310)"><use href="#t" fill="#6ae0c6"/><use href="#a"/><text class="n" x="53" y="32">5</text><text class="b" x="101" y="33">M</text><text class="b" x="147" y="33">S</text><text class="k" x="278" y="33.5">fx</text></g>
<g transform="translate(0,370)"><use href="#t" fill="#8ffaaa"/><use href="#a"/><text class="n" x="53" y="32">6</text><text class="b" x="101" y="33">M</text><text class="b" x="147" y="33">S</text><text class="k" x="278" y="33.5">GROO..LOOP</text></g>
<g transform="translate(0,430)"><use href="#t" fill="#b5fd9c"/><use href="#p"/><text class="n" x="53" y="32">7</text><text class="b" x="101" y="33">M</text><text class="b" x="147" y="33">S</text><text class="k" x="278" y="33.5">Nexus</text></g>
<g transform="translate(0,490)"><use href="#t" fill="#a6fb4a"/><use href="#p"/><text class="n" x="53" y="32">8</text><text class="b" x="101" y="33">M</text><text class="b" x="147" y="33">S</text><text class="k" x="278" y="33.5">RAW</text></g>
<g transform="translate(0,550)"><use href="#t" fill="#b5fd9c"/><use href="#p"/><text class="n" x="53" y="32">9</text><text class="b" x="101" y="33">M</text><text class="b" x="147" y="33">S</text><text class="k" x="278" y="33.5">Spire-1.5</text></g>
<g transform="translate(0,610)"><use href="#t" fill="#b5fd9c"/><use href="#p"/><text class="n" x="53" y="32">10</text><text class="b" x="101" y="33">M</text><text class="b" x="147" y="33">S</text><text class="k" x="278" y="33.5">Spire-1.5 3</text></g>
<g transform="translate(0,670)"><use href="#t" fill="#a6fb4a"/><use href="#p"/><text class="n" x="53" y="32">11</text><text class="b" x="101" y="33">M</text><text class="b" x="147" y="33">S</text><text class="k" x="278" y="33.5">Serum</text></g>
<g transform="translate(0,730)"><use href="#t" fill="#a6fb4a"/><use href="#p"/><text class="n" x="53" y="32">12</text><text class="b" x="101" y="33">M</text><text class="b" x="147" y="33">S</text><text class="k" x="278" y="33.5">PAD</text></g>
<g transform="translate(0,790)"><use href="#t" fill="#a6fb4a"/><rect x="172" y="4" width="46" height="41.5" fill="#e86565"/><circle cx="195" cy="25" r="9.2" fill="#f4f4f4"/><rect x="220" y="4" width="43.5" height="41.5" rx="4" fill="#74b4d4"/><path d="M243,16 A9,9 0 0 0 243,34 Z" fill="#f4f4f4"/><path d="M248,17 A9,9 0 0 1 248,33" fill="none" stroke="#f4f4f4" stroke-width="1.6"/><use href="#p"/><text class="n" x="53" y="32">13</text><text class="b" x="101" y="33">M</text><text class="b" x="147" y="33">S</text><text class="k" x="278" y="33.5">Spire-1.5</text></g>
<g transform="translate(0,850)"><use href="#t" fill="#b5fd9c"/><use href="#p"/><text class="n" x="53" y="32">14</text><text class="b" x="101" y="33">M</text><text class="b" x="147" y="33">S</text><text class="k" x="278" y="33.5">Spire-1.5</text></g>
<g transform="translate(0,910)"><use href="#t" fill="#b5fd9c"/><use href="#p"/><text class="n" x="53" y="32">15</text><text class="b" x="101" y="33">M</text><text class="b" x="147" y="33">S</text><text class="k" x="278" y="33.5">Spire-1.5 2</text></g>
<g transform="translate(0,970)"><use href="#t" fill="#b5fd9c"/><use href="#a"/><text class="n" x="53" y="32">16</text><text class="b" x="101" y="33">M</text><text class="b" x="147" y="33">S</text><text class="k" x="278" y="33.5">HAT</text></g>
<g transform="translate(0,1030)"><use href="#t" fill="#a6fb4a"/><use href="#a"/><text class="n" x="53" y="32">17</text><text class="b" x="101" y="33">M</text><text class="b" x="147" y="33">S</text><text class="k" x="278" y="33.5">RIDE</text></g>
<g transform="translate(0,1090)"><use href="#t" fill="#e5fb4e"/><use href="#a"/><text class="n" x="53" y="32">18</text><text class="b" x="101" y="33">M</text><text class="b" x="147" y="33">S</text><text class="k" x="278" y="33.5">SNARELOOP</text></g>
<g transform="translate(0,1150)"><use href="#t" fill="#a6fb4a"/><use href="#a"/><text class="n" x="53" y="32">19</text><text class="b" x="101" y="33">M</text><text class="b" x="147" y="33">S</text><text class="k" x="278" y="33.5">HI KICK</text></g>
<g transform="translate(0,1210)"><use href="#t" fill="#e5fd50"/><use href="#a"/><text class="n" x="53" y="32">20</text><text class="b" x="101" y="33">M</text><text class="b" x="147" y="33">S</text><text class="k" x="278" y="33.5">KICK BU</text></g>
<g transform="translate(0,1270)"><use href="#t" fill="#ea5c85"/><use href="#a"/><text class="n" x="53" y="32">21</text><text class="b" x="101" y="33">M</text><text class="b" x="147" y="33">S</text><text class="k" x="278" y="33.5">KICK HI2</text></g>
<g transform="translate(0,1330)"><use href="#t" fill="#ec3060"/><use href="#a"/><text class="n" x="53" y="32">22</text><text class="b" x="101" y="33">M</text><text class="b" x="147" y="33">S</text><text class="k" x="278" y="33.5">KICK</text></g>
<g transform="translate(0,1390)"><use href="#t" fill="#54b6f8"/><use href="#a"/><text class="n" x="53" y="32">23</text><text class="b" x="101" y="33">M</text><text class="b" x="147" y="33">S</text><text class="k" x="278" y="33.5">REVER..RASH</text></g>
<g transform="translate(0,1450)"><use href="#t" fill="#4ba5f6"/><use href="#a"/><text class="n" x="53" y="32">24</text><text class="b" x="101" y="33">M</text><text class="b" x="147" y="33">S</text><text class="k" x="278" y="33.5">riser</text></g>
<g transform="translate(0,1510)"><use href="#t" fill="#2f68f0"/><use href="#a"/><text class="n" x="53" y="32">25</text><text class="b" x="101" y="33">M</text><text class="b" x="147" y="33">S</text><text class="k" x="278" y="33.5">RK_BT..4bpm</text></g>

<!-- toolbar -->
<path d="M6,66 V14 Q6,6 14,6 H514 V66Z" fill="#2b2c2e"/>
<g fill="#8f9092">
<rect x="24" y="26" width="34" height="4.4" rx="2"/><rect x="24" y="32" width="34" height="4.4" rx="2"/><rect x="24" y="38" width="34" height="4.4" rx="2"/><rect x="24" y="44" width="34" height="4.4" rx="2"/>
<rect x="94" y="22" width="6" height="6"/><rect x="94" y="33" width="6" height="19"/>
<path d="M147,23 C141,23 138,29 140,34 C143,38 148,39 151,37 L163,51 Q166,53 168,51 Q170,48 168,46 L156,33 C158,29 157,25 153,23 L148,24 L152,29 L149,33 L144,29 L142,27 Z"/>
<rect x="414" y="24" width="32" height="6.5"/><rect x="414" y="34.5" width="15" height="6.5"/><rect x="432" y="34.5" width="14" height="6.5"/><rect x="414" y="44" width="32" height="6.5"/>
<rect x="484" y="22" width="6" height="30"/><rect x="472" y="34" width="30" height="6"/>
<circle cx="193" cy="50" r="2.8"/><circle cx="209" cy="24" r="2.8"/><circle cx="220" cy="50" r="2.8"/><circle cx="234" cy="24" r="2.8"/>
</g>
<path d="M193,50 Q196,33 207,25 M211,27 L219,47 M222,47 L232,27" fill="none" stroke="#8f9092" stroke-width="2.6"/>

<!-- ruler -->
<rect x="516" y="18" width="2216" height="52" fill="#383d46"/>
<rect x="516" y="6" width="2216" height="12" fill="#6bb2e8"/>
<rect x="2732" y="6" width="50" height="12" fill="#3b3d3f"/>
<path d="M516,18 H526 V28 L516,38Z" fill="#6bb2e8"/>
<path d="M2712,18 H2732 V38Z" fill="#6bb2e8"/>
<path d="M517 52V70M581 52V70M645 52V70M708 52V70M772 52V70M836 52V70M900 52V70M963 52V70M1027 52V70M1091 52V70M1155 52V70M1219 52V70M1282 52V70M1346 52V70M1410 52V70M1474 52V70M1538 52V70M1601 52V70M1665 52V70M1729 52V70M1793 52V70M1856 52V70M1920 52V70M1984 52V70M2048 52V70M2112 52V70M2175 52V70M2239 52V70M2303 52V70M2367 52V70M2430 52V70M2494 52V70M2558 52V70M2622 52V70M2686 52V70M2749 52V70" stroke="#d2d3d4" stroke-width="2"/>
<g class="h">
<text class="h" x="520" y="41">1</text><text class="h" x="648" y="41">9</text><text class="h" x="775" y="41">17</text><text class="h" x="903" y="41">25</text><text class="h" x="1030" y="41">33</text><text class="h" x="1158" y="41">41</text><text class="h" x="1285" y="41">49</text><text class="h" x="1413" y="41">57</text><text class="h" x="1541" y="41">65</text><text class="h" x="1668" y="41">73</text><text class="h" x="1796" y="41">81</text><text class="h" x="1923" y="41">89</text><text class="h" x="2051" y="41">97</text><text class="h" x="2179" y="41">105</text><text class="h" x="2307" y="41">113</text><text class="h" x="2434" y="41">121</text><text class="h" x="2561" y="41">129</text><text class="h" x="2688" y="41">137</text>
</g>
<rect x="514" y="6" width="2" height="1570" fill="#111214"/>

<!-- playhead -->
<rect x="532" y="18" width="2" height="1524" fill="#b0b1b2"/>

<!-- bottom bar -->
<rect x="6" y="1542" width="508" height="34" fill="#2b2c2e"/>
<rect x="516" y="1542" width="2266" height="34" fill="#28292b"/>
<rect x="0" y="1576" width="2782" height="2" fill="#111214"/>
<rect x="0" y="1578" width="2782" height="6" fill="#2b2d30"/>
<rect x="0" y="0" width="4" height="1584" fill="#2b2d30"/><rect x="4" y="6" width="2" height="1572" fill="#111214"/>
<text x="53" y="1568" font-size="18" fill="#dcdcdc" text-anchor="middle">M</text>
<text x="152" y="1568" font-size="18" fill="#dcdcdc" text-anchor="middle">S</text>
<path d="M243.5,1553 A9,9 0 1 0 254.5,1553" fill="none" stroke="#3d8fe0" stroke-width="3"/><path d="M249,1549V1561" stroke="#3d8fe0" stroke-width="3"/>
<text x="370" y="1567" font-size="20" fill="#b8b8b8" text-anchor="middle">Tiny</text>
<path d="M444,1556H460L452,1566Z" fill="#7f8082"/>
<rect x="486" y="1550" width="16" height="4" rx="1" fill="#77787a"/><rect x="486" y="1556" width="16" height="4" rx="1" fill="#77787a"/><rect x="486" y="1561" width="16" height="5" rx="1" fill="#77787a"/>
<path d="M542,1550V1568L530,1559Z" fill="#808183"/>
<rect x="566" y="1553" width="740" height="11" rx="5" fill="#808183"/>
<path d="M2572,1551V1569L2584,1560Z" fill="#808183"/>
<circle cx="2616" cy="1560" r="4" fill="#808183"/><rect x="2616" y="1558.5" width="18" height="3" fill="#808183"/><rect x="2636" y="1550" width="8" height="20" rx="3" fill="#808183"/><rect x="2646" y="1558.5" width="136" height="3" fill="#808183"/>
</svg>
</body></html>
